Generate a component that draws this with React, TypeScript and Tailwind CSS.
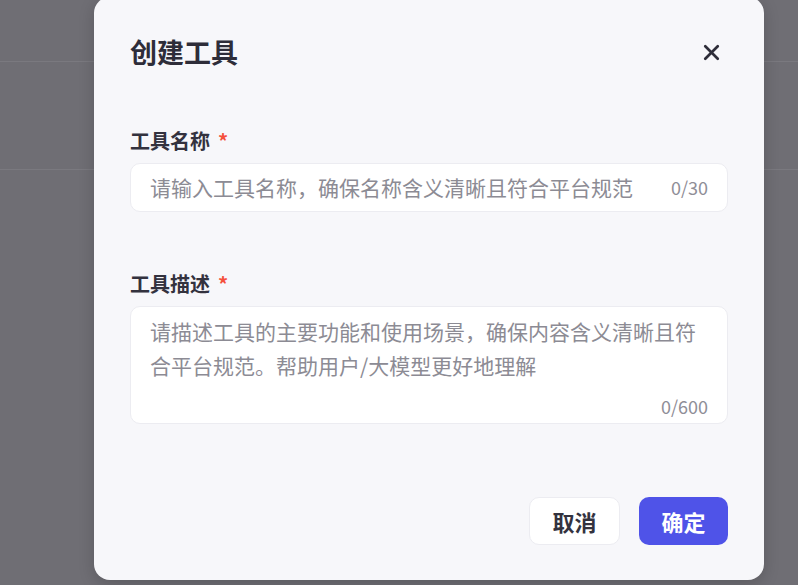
import { X } from 'lucide-react';

const font = { fontFamily: '"Noto Sans CJK SC", "Noto Sans", sans-serif' };

function Label({ text }: { text: string }) {
  return (
    <div className="flex items-center gap-2 text-[20px] leading-[28px] font-bold text-[#33323e]">
      <span>{text}</span>
      <span className="text-[#f5503c]">*</span>
    </div>
  );
}

export default function App() {
  return (
    <div className="relative w-[798px] h-[585px] overflow-hidden bg-[#6f6e74]" style={font}>
      {/* page behind the overlay */}
      <div className="h-[62px] border-b border-[#7a797f]" />
      <div className="h-[108px] border-b border-[#7a797f]" />

      <div className="absolute inset-0">
        <div className="ml-[94px] mt-[-3px] w-[670px] rounded-2xl bg-[#f7f7fa] px-[36px] pt-[38px] pb-[35px] shadow-[0_4px_16px_rgba(0,0,0,0.18)]">
          {/* Header */}
          <div className="flex items-center justify-between">
            <h2 className="text-[27px] leading-[34px] font-bold text-[#2e2d39]">创建工具</h2>
            <button className="mr-[4px] text-[#2e2d39]">
              <X size={25} strokeWidth={2.6} />
            </button>
          </div>

          {/* Name */}
          <div className="mt-[58px]">
            <Label text="工具名称" />
            <div className="mt-2 flex h-[49px] items-center rounded-[10px] border border-[#ececf1] bg-white px-[19px]">
              <input
                className="flex-1 bg-transparent text-[21px] outline-none placeholder:text-[#8c8b94]"
                placeholder="请输入工具名称，确保名称含义清晰且符合平台规范"
              />
              <span className="text-[18px] text-[#8f8e97]">0/30</span>
            </div>
          </div>

          {/* Description */}
          <div className="mt-[58px]">
            <Label text="工具描述" />
            <div className="mt-2 flex h-[118px] flex-col rounded-[10px] border border-[#ececf1] bg-white pl-[19px] pr-[19px] pt-[7px] pb-[5px]">
              <textarea
                className="flex-1 resize-none bg-transparent text-[21px] leading-[34px] outline-none placeholder:text-[#8c8b94]"
                placeholder="请描述工具的主要功能和使用场景，确保内容含义清晰且符合平台规范。帮助用户/大模型更好地理解"
              />
              <div className="text-right text-[18px] leading-[24px] text-[#8f8e97]">0/600</div>
            </div>
          </div>

          {/* Footer */}
          <div className="mt-[73px] flex justify-end gap-[19px]">
            <button className="h-[48px] w-[91px] rounded-[10px] border border-[#ececf1] bg-white text-[22px] font-bold text-[#33323e]">
              取消
            </button>
            <button className="h-[48px] w-[89px] rounded-[10px] bg-[#4f53e8] text-[22px] font-bold text-white">
              确定
            </button>
          </div>
        </div>
      </div>
    </div>
  );
}
